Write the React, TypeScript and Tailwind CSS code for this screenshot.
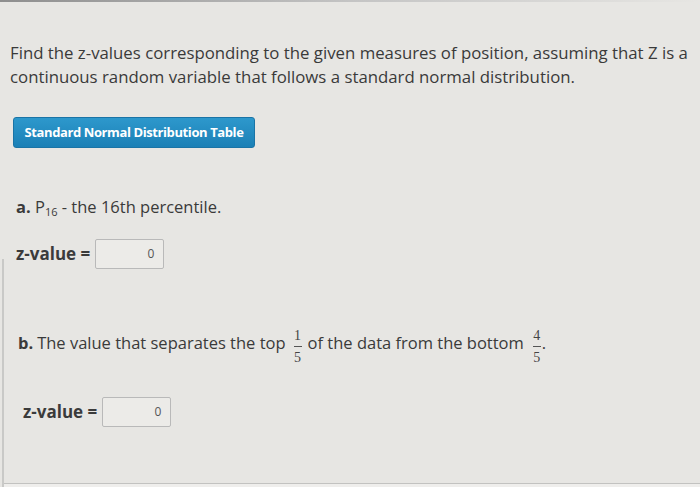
import React from 'react';

function Frac({ top, bottom }: { top: string; bottom: string }) {
  return (
    <span className="inline-flex flex-col items-center font-['Liberation_Serif',serif] text-[14px] leading-[15px] text-[#444]">
      <span>{top}</span>
      <span className="w-[8px] h-px bg-[#555] my-[3px]" />
      <span>{bottom}</span>
    </span>
  );
}

function ZValue({ ml }: { ml: string }) {
  return (
    <div className={`flex items-center ${ml}`}>
      <span className="font-bold text-[17px] text-[#3b3b3b]">z-value =</span>
      <div className="ml-[5px] w-[69px] h-[30px] border border-[#b9b9b9] rounded-[2px] bg-[#ecebe8] flex items-center justify-end pr-[9px] text-[12px] text-[#555]">
        0
      </div>
    </div>
  );
}

export default function App() {
  return (
    <div className="w-[700px] h-[487px] bg-[#e7e6e3] flex flex-col overflow-hidden font-['Open_Sans',sans-serif] text-[#3a3a3a]">
      <div className="h-[2px] bg-gradient-to-r from-[#8e8e8e] via-[#c4c4c4] to-transparent" />
      <p className="mt-[39px] ml-[10px] mr-[4px] text-[16.8px] leading-[24px]">
        Find the z-values corresponding to the given measures of position, assuming that Z is a continuous random
        variable that follows a standard normal distribution.
      </p>
      <div className="mt-[28px] ml-[13px]">
        <button className="w-[242px] h-[31px] rounded-[3px] bg-gradient-to-b from-[#2d98cc] to-[#1b80b6] border border-[#1a74a6] text-white text-[13px] font-bold tracking-[-0.4px]">
          Standard Normal Distribution Table
        </button>
      </div>
      <p className="mt-[47px] ml-[16px] text-[16.5px] leading-[24px]">
        <span className="font-bold">a.</span> P<sub className="text-[11px]">16</sub> - the 16th percentile.
      </p>
      <div className="mt-[20px]">
        <ZValue ml="ml-[16px]" />
      </div>
      <div className="flex-1 mt-[-10px] ml-[2px] border-l-2 border-[#c9c9c7] flex flex-col">
        <div className="mt-[63px] ml-[14px] flex items-center text-[16.5px]">
          <span className="font-bold">b.</span>
          <span className="ml-[4px]">The value that separates the top</span>
          <span className="ml-[8px] mr-[6px]">
            <Frac top="1" bottom="5" />
          </span>
          <span>of the data from the bottom</span>
          <span className="ml-[9px]">
            <Frac top="4" bottom="5" />
          </span>
          <span className="ml-[1px]">.</span>
        </div>
        <div className="mt-[32px]">
          <ZValue ml="ml-[19px]" />
        </div>
        <div className="flex-1" />
        <div className="h-px bg-[#c2c2c0]" />
        <div className="h-[3px] bg-[#efeeec]" />
      </div>
    </div>
  );
}
